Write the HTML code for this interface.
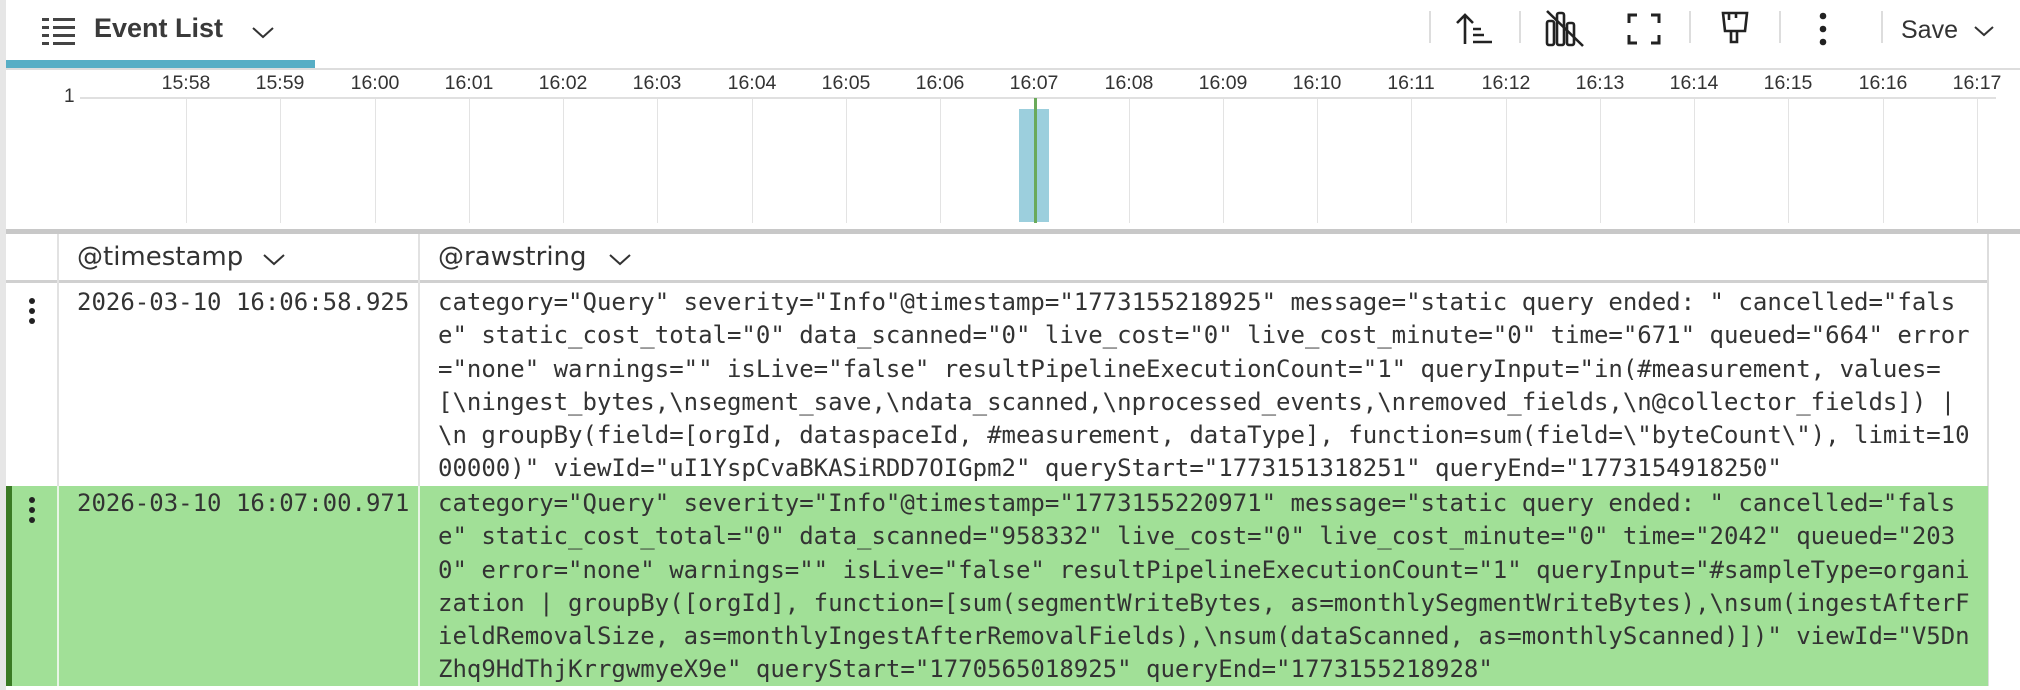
<!DOCTYPE html>
<html><head><meta charset="utf-8"><style>
*{margin:0;padding:0;box-sizing:border-box}
body{width:2020px;height:690px;overflow:hidden;background:#e6e6e6;position:relative;font-family:"Liberation Sans",sans-serif;color:#333}
.a{position:absolute}
.mono{font-family:"DejaVu Sans Mono","Liberation Mono",monospace;font-size:24px;color:#333;white-space:pre;line-height:33.3px}
.tl{position:absolute;top:72px;font-size:19.5px;color:#333;transform:translateX(-50%)}
.gl{position:absolute;top:99px;height:124px;width:1px;background:#e3e3e3}
.sep{position:absolute;top:11px;height:32px;width:2px;background:#ddd}
</style></head><body>
<div class="a" style="left:6px;top:0;width:2014px;height:690px;background:#fff"></div>
<svg class="a" style="left:42px;top:18px" width="33" height="28" viewBox="0 0 33 28"><g fill="#444"><rect x="0" y="0" width="7" height="3"/><rect x="11" y="0" width="22" height="3"/><rect x="0" y="8" width="7" height="3"/><rect x="11" y="8" width="22" height="3"/><rect x="0" y="16" width="7" height="3"/><rect x="11" y="16" width="22" height="3"/><rect x="0" y="24" width="7" height="3"/><rect x="11" y="24" width="22" height="3"/></g></svg>
<div class="a" style="left:94px;top:13px;font-size:27px;font-weight:bold;color:#3a3a3a">Event List</div>
<svg class="a" style="left:251px;top:26px" width="24" height="13"><path d="M2 2 L12 11 L22 2" fill="none" stroke="#333" stroke-width="2"/></svg>
<div class="a" style="left:6px;top:60px;width:309px;height:8px;background:#57aec5"></div>
<div class="sep" style="left:1429px"></div>
<svg class="a" style="left:1456px;top:12px" width="38" height="34" viewBox="0 0 38 34"><g stroke="#222" stroke-width="2.6" fill="none"><path d="M9 32 V3 M1 11 L9 3 L17 11"/><path d="M17 17 H25 M17 23 H28 M17 30 H36"/></g></svg>
<div class="sep" style="left:1519px"></div>
<svg class="a" style="left:1545px;top:9px" width="40" height="38" viewBox="0 0 40 38"><g stroke="#222" stroke-width="2.6" fill="none"><rect x="2" y="12" width="7" height="24" rx="2"/><rect x="12" y="4" width="7" height="32" rx="2"/><rect x="22" y="14" width="7" height="22" rx="2"/><path d="M2 2 L38 37"/></g></svg>
<svg class="a" style="left:1627px;top:13px" width="34" height="32" viewBox="0 0 34 32"><g stroke="#222" stroke-width="3" fill="none"><path d="M10 2 H2 V10 M24 2 H32 V10 M2 22 V30 H10 M32 22 V30 H24"/></g></svg>
<div class="sep" style="left:1689px"></div>
<svg class="a" style="left:1721px;top:11px" width="28" height="34" viewBox="0 0 28 34"><g stroke="#222" stroke-width="2.6" fill="none"><path d="M2 2 H26 L24 20 H4 Z"/><path d="M10 20 V31 H16 V20"/><path d="M8 2 V9 M15 2 V7"/></g></svg>
<div class="sep" style="left:1779px"></div>
<svg class="a" style="left:1817px;top:12px" width="12" height="34"><g fill="#222"><circle cx="6" cy="4" r="3.3"/><circle cx="6" cy="17" r="3.3"/><circle cx="6" cy="30" r="3.3"/></g></svg>
<div class="sep" style="left:1881px"></div>
<div class="a" style="left:1901px;top:16px;font-size:25px;color:#333">Save</div>
<svg class="a" style="left:1973px;top:25px" width="22" height="12"><path d="M2 2 L11 10 L20 2" fill="none" stroke="#333" stroke-width="2"/></svg>
<div class="a" style="left:6px;top:68px;width:2014px;height:2px;background:#ddd"></div>
<div class="a" style="left:64px;top:86px;font-size:19px;color:#333">1</div>
<div class="a" style="left:80px;top:97px;width:1916px;height:2px;background:#e0e0e0"></div>
<div class="a" style="left:1019px;top:109px;width:30px;height:113px;background:#9ccfdd"></div>
<div class="a" style="left:1034px;top:98px;width:3px;height:125px;background:#6aaa5a"></div>
<div class="a" style="left:6px;top:229px;width:2014px;height:5px;background:#c8c8c8"></div>
<div class="a" style="left:6px;top:234px;width:1982px;height:49px;background:#fff;border-bottom:3px solid #d0d0d0"></div>
<div class="a" style="left:57px;top:234px;width:2px;height:452px;background:#e2e2e2"></div>
<div class="a" style="left:418px;top:234px;width:2px;height:452px;background:#e2e2e2"></div>
<div class="a" style="left:1987px;top:234px;width:2px;height:456px;background:#ddd"></div>
<div class="a" style="left:77px;top:242px;font-size:26px;color:#333;font-family:'DejaVu Sans',sans-serif">@timestamp</div>
<svg class="a" style="left:262px;top:253px" width="24" height="13"><path d="M2 2 L12 11 L22 2" fill="none" stroke="#333" stroke-width="2"/></svg>
<div class="a" style="left:438px;top:242px;font-size:26px;color:#333;font-family:'DejaVu Sans',sans-serif">@rawstring</div>
<svg class="a" style="left:608px;top:253px" width="24" height="13"><path d="M2 2 L12 11 L22 2" fill="none" stroke="#333" stroke-width="2"/></svg>
<svg class="a" style="left:26px;top:297px" width="12" height="30"><g fill="#222"><circle cx="6" cy="4" r="3"/><circle cx="6" cy="14" r="3"/><circle cx="6" cy="24" r="3"/></g></svg>
<div class="a mono" style="left:77px;top:286px">2026-03-10 16:06:58.925</div>
<div class="a mono" style="left:438px;top:286px">category="Query" severity="Info"@timestamp="1773155218925" message="static query ended: " cancelled="fals
e" static_cost_total="0" data_scanned="0" live_cost="0" live_cost_minute="0" time="671" queued="664" error
="none" warnings="" isLive="false" resultPipelineExecutionCount="1" queryInput="in(#measurement, values=
[\ningest_bytes,\nsegment_save,\ndata_scanned,\nprocessed_events,\nremoved_fields,\n@collector_fields]) |
\n groupBy(field=[orgId, dataspaceId, #measurement, dataType], function=sum(field=\"byteCount\"), limit=10
00000)" viewId="uI1YspCvaBKASiRDD7OIGpm2" queryStart="1773151318251" queryEnd="1773154918250"</div>
<div class="a" style="left:6px;top:486px;width:1982px;height:200px;background:#a1e097"></div>
<div class="a" style="left:6px;top:486px;width:6px;height:200px;background:#3a7a24"></div>
<div class="a" style="left:57px;top:486px;width:2px;height:200px;background:#e8f5e5"></div>
<div class="a" style="left:418px;top:486px;width:2px;height:200px;background:#e8f5e5"></div>
<svg class="a" style="left:26px;top:496px" width="12" height="30"><g fill="#222"><circle cx="6" cy="4" r="3"/><circle cx="6" cy="14" r="3"/><circle cx="6" cy="24" r="3"/></g></svg>
<div class="a mono" style="left:77px;top:487px">2026-03-10 16:07:00.971</div>
<div class="a mono" style="left:438px;top:487px">category="Query" severity="Info"@timestamp="1773155220971" message="static query ended: " cancelled="fals
e" static_cost_total="0" data_scanned="958332" live_cost="0" live_cost_minute="0" time="2042" queued="203
0" error="none" warnings="" isLive="false" resultPipelineExecutionCount="1" queryInput="#sampleType=organi
zation | groupBy([orgId], function=[sum(segmentWriteBytes, as=monthlySegmentWriteBytes),\nsum(ingestAfterF
ieldRemovalSize, as=monthlyIngestAfterRemovalFields),\nsum(dataScanned, as=monthlyScanned)])" viewId="V5Dn
Zhq9HdThjKrrgwmyeX9e" queryStart="1770565018925" queryEnd="1773155218928"</div>
<div class="a" style="left:6px;top:686px;width:2014px;height:4px;background:#fff"></div>
<div class="tl" style="left:186px">15:58</div><div class="gl" style="left:186px"></div>
<div class="tl" style="left:280px">15:59</div><div class="gl" style="left:280px"></div>
<div class="tl" style="left:375px">16:00</div><div class="gl" style="left:375px"></div>
<div class="tl" style="left:469px">16:01</div><div class="gl" style="left:469px"></div>
<div class="tl" style="left:563px">16:02</div><div class="gl" style="left:563px"></div>
<div class="tl" style="left:657px">16:03</div><div class="gl" style="left:657px"></div>
<div class="tl" style="left:752px">16:04</div><div class="gl" style="left:752px"></div>
<div class="tl" style="left:846px">16:05</div><div class="gl" style="left:846px"></div>
<div class="tl" style="left:940px">16:06</div><div class="gl" style="left:940px"></div>
<div class="tl" style="left:1034px">16:07</div>
<div class="tl" style="left:1129px">16:08</div><div class="gl" style="left:1129px"></div>
<div class="tl" style="left:1223px">16:09</div><div class="gl" style="left:1223px"></div>
<div class="tl" style="left:1317px">16:10</div><div class="gl" style="left:1317px"></div>
<div class="tl" style="left:1411px">16:11</div><div class="gl" style="left:1411px"></div>
<div class="tl" style="left:1506px">16:12</div><div class="gl" style="left:1506px"></div>
<div class="tl" style="left:1600px">16:13</div><div class="gl" style="left:1600px"></div>
<div class="tl" style="left:1694px">16:14</div><div class="gl" style="left:1694px"></div>
<div class="tl" style="left:1788px">16:15</div><div class="gl" style="left:1788px"></div>
<div class="tl" style="left:1883px">16:16</div><div class="gl" style="left:1883px"></div>
<div class="tl" style="left:1977px">16:17</div><div class="gl" style="left:1977px"></div>
</body></html>
